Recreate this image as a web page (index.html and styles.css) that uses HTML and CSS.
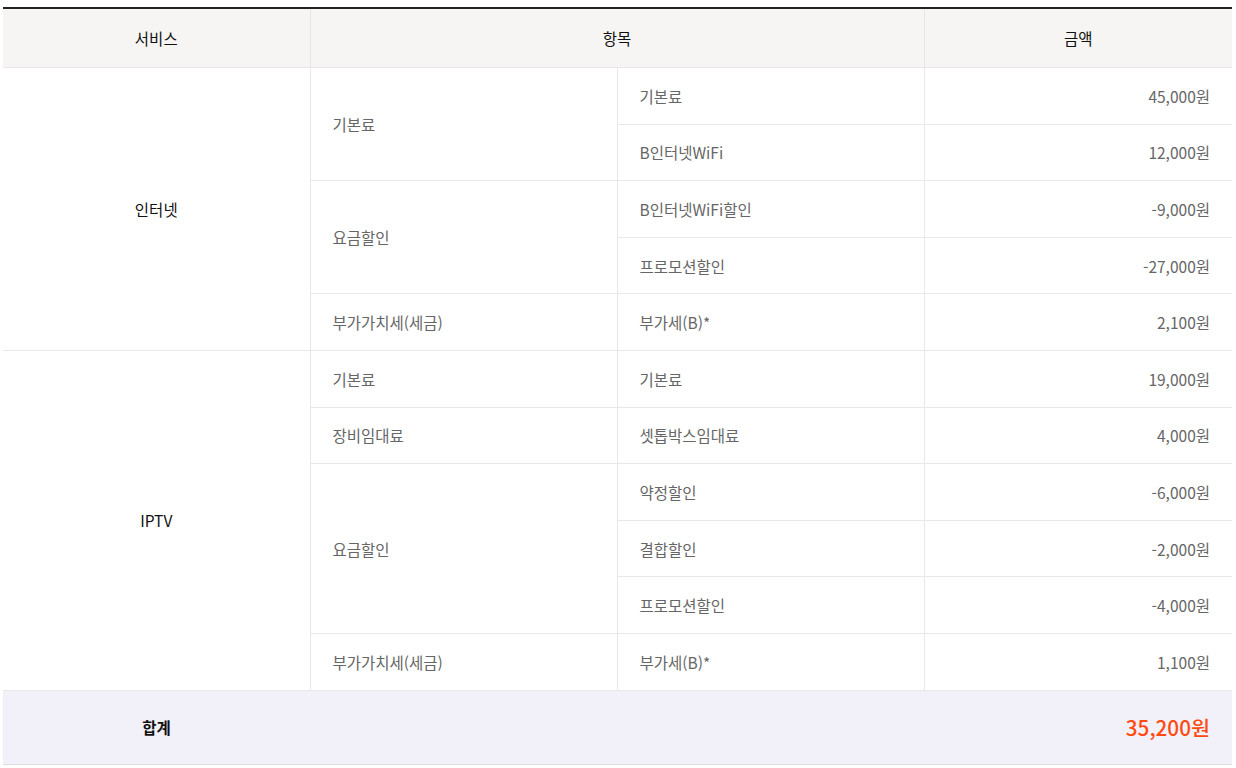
FILE: index.html
```html
<!DOCTYPE html>
<html lang="ko">
<head>
<meta charset="utf-8">
<link rel="stylesheet" href="styles.css">
</head>
<body>
<div class="wrap">
<table class="bill">
  <colgroup>
    <col class="c1"><col class="c2"><col class="c3"><col class="c4">
  </colgroup>
  <thead>
    <tr>
      <th>서비스</th>
      <th colspan="2">항목</th>
      <th>금액</th>
    </tr>
  </thead>
  <tbody>
    <tr>
      <td rowspan="5" class="svc">인터넷</td>
      <td rowspan="2">기본료</td>
      <td>기본료</td>
      <td class="amt">45,000원</td>
    </tr>
    <tr>
      <td>B인터넷WiFi</td>
      <td class="amt">12,000원</td>
    </tr>
    <tr>
      <td rowspan="2">요금할인</td>
      <td>B인터넷WiFi할인</td>
      <td class="amt">-9,000원</td>
    </tr>
    <tr>
      <td>프로모션할인</td>
      <td class="amt">-27,000원</td>
    </tr>
    <tr>
      <td>부가가치세(세금)</td>
      <td>부가세(B)*</td>
      <td class="amt">2,100원</td>
    </tr>
    <tr>
      <td rowspan="6" class="svc">IPTV</td>
      <td>기본료</td>
      <td>기본료</td>
      <td class="amt">19,000원</td>
    </tr>
    <tr>
      <td>장비임대료</td>
      <td>셋톱박스임대료</td>
      <td class="amt">4,000원</td>
    </tr>
    <tr>
      <td rowspan="3">요금할인</td>
      <td>약정할인</td>
      <td class="amt">-6,000원</td>
    </tr>
    <tr>
      <td>결합할인</td>
      <td class="amt">-2,000원</td>
    </tr>
    <tr>
      <td>프로모션할인</td>
      <td class="amt">-4,000원</td>
    </tr>
    <tr>
      <td>부가가치세(세금)</td>
      <td>부가세(B)*</td>
      <td class="amt">1,100원</td>
    </tr>
  </tbody>
  <tfoot>
    <tr>
      <th class="total-label">합계</th>
      <td colspan="3" class="total-amt">35,200원</td>
    </tr>
  </tfoot>
</table>
</div>
</body>
</html>
```
FILE: styles.css
```css
html, body {
  margin: 0;
  padding: 0;
  background: #fff;
}
body {
  font-family: "Noto Sans CJK KR", "Noto Sans", sans-serif;
}
.wrap {
  padding: 7px 4px 0 3px;
}
.bill {
  width: 1229px;
  table-layout: fixed;
  border-collapse: collapse;
  border-top: 2px solid #222;
  font-size: 15.5px;
}
.c1, .c2, .c3 { width: 307px; }
.c4 { width: 308px; }
.bill thead th {
  height: 58px;
  padding: 0;
  background: #f6f5f3;
  font-weight: 400;
  color: #111;
  text-align: center;
  border-left: 1px solid #e6e6e6;
}
.bill thead th:first-child { border-left: 0; }
.bill tbody td {
  height: 55.6px;
  padding: 0 22px;
  color: #666;
  text-align: left;
  border: 1px solid #e8e8e8;
  line-height: 20px;
}
.bill tbody td:last-child { border-right: 0; }
.bill tbody td.svc {
  border-left: 0;
  text-align: center;
  color: #111;
  padding: 0;
}
.bill tbody td.amt { text-align: right; }
.bill tfoot tr {
  background: #f2f1fa;
  border-top: 1px solid #dcdcdc;
  border-bottom: 1px solid #dcdcdc;
}
.bill tfoot th.total-label {
  height: 73px;
  padding: 0;
  font-weight: 700;
  color: #111;
  text-align: center;
}
.bill tfoot td.total-amt {
  padding: 0 22px;
  text-align: right;
  color: #ff4b12;
  font-size: 20.7px;
  font-weight: 500;
}
```
